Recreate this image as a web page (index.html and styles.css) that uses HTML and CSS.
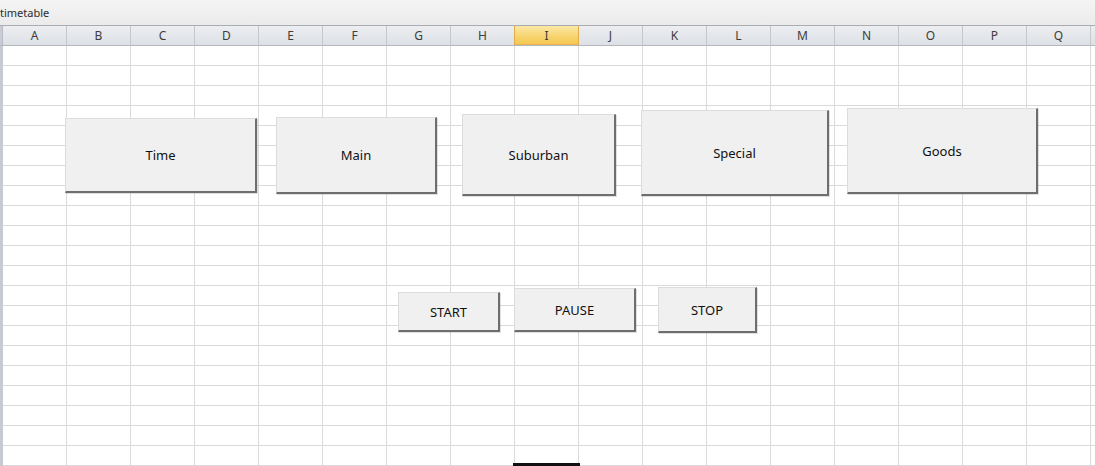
FILE: index.html
```html
<!doctype html>
<html>
<head>
  <meta charset="utf-8">
  <title>timetable</title>
  <link rel="stylesheet" href="styles.css">
</head>
<body>
  <div class="titlebar">timetable</div>

  <div class="colheads">
    <div class="corner"></div>
    <div class="colhead">A</div>
    <div class="colhead">B</div>
    <div class="colhead">C</div>
    <div class="colhead">D</div>
    <div class="colhead">E</div>
    <div class="colhead">F</div>
    <div class="colhead">G</div>
    <div class="colhead">H</div>
    <div class="colhead selected">I</div>
    <div class="colhead">J</div>
    <div class="colhead">K</div>
    <div class="colhead">L</div>
    <div class="colhead">M</div>
    <div class="colhead">N</div>
    <div class="colhead">O</div>
    <div class="colhead">P</div>
    <div class="colhead">Q</div>
  </div>

  <div class="sheet">
    <div class="rowstrip"></div>
    <div class="cells">
      <!-- botões da folha (formas por cima da grelha) -->
      <button class="sheetbtn btn-time">Time</button>
      <button class="sheetbtn btn-main">Main</button>
      <button class="sheetbtn btn-suburban">Suburban</button>
      <button class="sheetbtn btn-special">Special</button>
      <button class="sheetbtn btn-goods">Goods</button>

      <button class="sheetbtn btn-start">START</button>
      <button class="sheetbtn btn-pause">PAUSE</button>
      <button class="sheetbtn btn-stop">STOP</button>

      <span class="activecell"></span>
    </div>
  </div>
</body>
</html>
```

FILE: styles.css
```css
* {
  box-sizing: border-box;
}
body {
  margin: 0;
  width: 1095px;
  height: 466px;
  overflow: hidden;
  background-color: #ffffff;
  font-family: "Noto Sans", "DejaVu Sans", sans-serif;
}

/* barra do nome da folha */
.titlebar {
  height: 26px;
  padding-left: 0px;
  line-height: 26px;
  font-size: 11px;
  color: #2b2b2b;
  background: linear-gradient(#f4f4f4, #ebebeb);
  border-bottom: 1px solid #a9acb1;
}

/* cabeçalhos das colunas */
.colheads {
  display: flex;
  height: 20px;
  border-bottom: 1px solid #b4b8be;
  background: linear-gradient(#eceef1, #dde0e5);
}
.corner {
  width: 3px;
  flex: none;
  border-right: 1px solid #b9bcc2;
  background-color: #c9ccd6;
}
.colhead {
  width: 64px;
  flex: none;
  border-right: 1px solid #c3c6cb;
  text-align: center;
  font-size: 12px;
  line-height: 19px;
  color: #3c3c3c;
}
.colhead.selected {
  background: linear-gradient(#fbe7a6, #f7d26a 60%, #f4c650);
  border-right-color: #e1ae4a;
  box-shadow: -1px 0 0 #e1ae4a, inset 0 -1px 0 #eab24a;
}

/* a grelha */
.sheet {
  display: flex;
  height: 420px;
}
.rowstrip {
  width: 3px;
  flex: none;
  border-right: 1px solid #c8cad0;
  background-color: #c6c9d6;
}
.cells {
  flex: 1;
  position: relative;
  background-image:
    repeating-linear-gradient(to right, transparent 0 63px, #dadada 63px 64px),
    repeating-linear-gradient(to bottom, transparent 0 19px, #dadada 19px 20px);
}

/* botões */
.sheetbtn {
  position: absolute;
  display: flex;
  align-items: center;
  justify-content: center;
  padding: 0;
  margin: 0;
  font-family: "Noto Sans", "DejaVu Sans", sans-serif;
  font-size: 13px;
  color: #111111;
  background-color: #f0f0f0;
  border-top: 1px solid #dcdcdc;
  border-left: 1px solid #dcdcdc;
  border-right: 2px solid #6e6e6e;
  border-bottom: 2px solid #6e6e6e;
  box-shadow: 1px 1px 0 rgba(0,0,0,0.12);
}
/* posições: x - 3, y - 46 */
.btn-time     { left: 62px;  top: 72px;  width: 192px; height: 75px; }
.btn-main     { left: 273px; top: 71px;  width: 161px; height: 77px; }
.btn-suburban { left: 459px; top: 68px;  width: 154px; height: 82px; }
.btn-special  { left: 638px; top: 64px;  width: 188px; height: 86px; }
.btn-goods    { left: 844px; top: 62px;  width: 191px; height: 86px; }

.btn-start { left: 395px; top: 246px; width: 102px; height: 40px; }
.btn-pause { left: 511px; top: 242px; width: 122px; height: 44px; }
.btn-stop  { left: 655px; top: 241px; width: 99px;  height: 46px; }

.activecell {
  position: absolute;
  left: 510px;
  top: 417px;
  width: 67px;
  height: 3px;
  background-color: #111111;
}
```
